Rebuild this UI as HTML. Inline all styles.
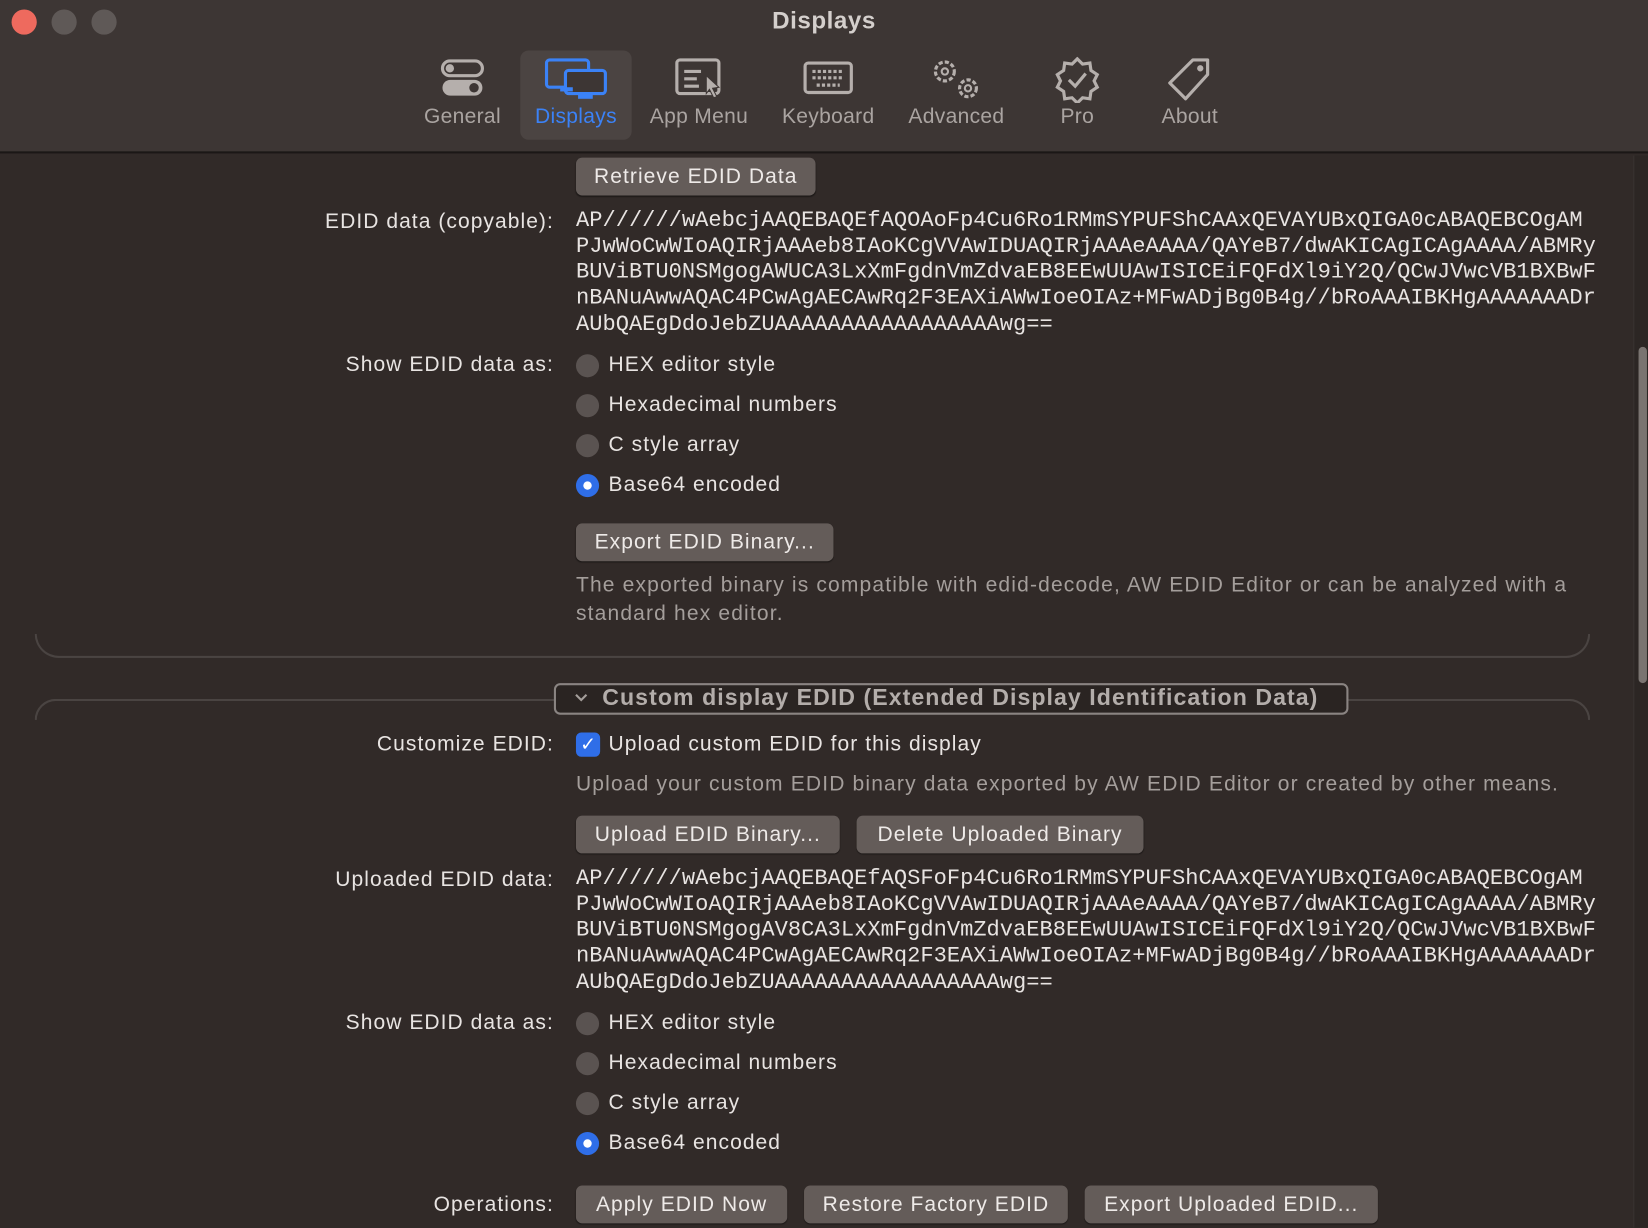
<!DOCTYPE html>
<html><head><meta charset="utf-8"><style>
*{margin:0;padding:0;box-sizing:border-box}
html,body{width:1648px;height:1228px;overflow:hidden;background:#312a28}
#w{width:1568px;height:1168px;transform:scale(1.05102);transform-origin:0 0;position:relative;font-family:"Liberation Sans",sans-serif;color:#e8e4e2}
.a{position:absolute;white-space:nowrap}
.tb{position:absolute;left:0;top:0;width:1568px;height:146px;background:#3d3634;border-bottom:2px solid #1b1716}
.dot{position:absolute;top:9px;width:24px;height:24px;border-radius:50%}
.tab{position:absolute;top:48px;height:85px;text-align:center;font-size:20px;color:#aaa4a1;letter-spacing:.3px}
.tab svg{position:absolute;left:50%;transform:translateX(-50%);top:6px}
.tab span{position:absolute;left:-10px;right:-10px;top:52px}
.ls{letter-spacing:1px}
.lbl{position:absolute;right:1041px;font-size:20px;text-align:right;white-space:nowrap;letter-spacing:1px}
.btn{position:absolute;height:36px;background:#645c59;border-radius:6px;font-size:20px;line-height:36px;text-align:center;color:#eeeae8;box-shadow:0 1px 1px rgba(0,0,0,.4);letter-spacing:1px}
.mono{position:absolute;left:548px;font-family:"Liberation Mono",monospace;font-size:21px;line-height:24.7px;color:#e8e4e2;white-space:pre}
.rad{position:absolute;left:548px;font-size:20px;white-space:nowrap;letter-spacing:1px}
.rad i{position:absolute;left:0;top:1px;width:22px;height:22px;border-radius:50%;background:#5a5351}
.rad b{font-weight:normal;position:absolute;left:31px;top:0}
.rad i.on{background:#2f6ee8}
.rad i.on:after{content:"";position:absolute;left:7px;top:7px;width:8px;height:8px;border-radius:50%;background:#fff}
.gray{color:#a49e9b;font-size:20px;letter-spacing:1.1px}
</style></head><body><div id="w">
<div class="tb"></div>
<div class="dot" style="left:11px;background:#ee6a5e"></div>
<div class="dot" style="left:49px;background:#5f5957"></div>
<div class="dot" style="left:87px;background:#5f5957"></div>
<div class="a" style="left:0;width:1568px;text-align:center;top:6px;font-size:23px;font-weight:bold;color:#d4cfcc;letter-spacing:.5px">Displays</div>

<div style="position:absolute;left:495px;top:48px;width:106px;height:85px;background:#4b4442;border-radius:8px"></div>
<div class="tab" style="left:390px;width:100px"><svg width="44" height="42" viewBox="0 0 44 42"><rect x="3" y="4" width="38" height="14" rx="7" fill="none" stroke="#b5afac" stroke-width="3"/><circle cx="10" cy="11" r="4" fill="#b5afac"/><rect x="3" y="22" width="38" height="15" rx="7.5" fill="#b5afac"/><circle cx="33" cy="29.5" r="4.5" fill="#3d3634"/></svg><span>General</span></div>
<div class="tab" style="left:495px;width:106px;color:#3b82f6"><svg width="62" height="42" viewBox="0 0 62 42"><rect x="3" y="3" width="40" height="26" rx="3" fill="none" stroke="#3b82f6" stroke-width="3"/><rect x="21" y="13" width="38" height="22" rx="3" fill="#3d3634" stroke="#3b82f6" stroke-width="3"/><rect x="16" y="29" width="12" height="4" fill="#3b82f6"/><rect x="33" y="35" width="14" height="5" fill="#3b82f6"/></svg><span>Displays</span></div>
<div class="tab" style="left:612px;width:106px"><svg width="48" height="42" viewBox="0 0 48 42"><rect x="3" y="3" width="40" height="32" rx="3" fill="none" stroke="#b5afac" stroke-width="3"/><path d="M10 14h16M10 21h12M10 28h14" stroke="#b5afac" stroke-width="3"/><path d="M31 18l12 11-6 1 4 8-3 1-4-8-3 4z" fill="#b5afac" stroke="#3d3634" stroke-width="1"/></svg><span>App Menu</span></div>
<div class="tab" style="left:736px;width:104px"><svg width="50" height="42" viewBox="0 0 50 42"><rect x="3" y="6" width="44" height="28" rx="3" fill="none" stroke="#b5afac" stroke-width="3"/><path d="M10 14h30M10 20h30M14 27h22" stroke="#b5afac" stroke-width="3" stroke-dasharray="3 2"/></svg><span>Keyboard</span></div>
<div class="tab" style="left:856px;width:108px"><svg width="54" height="42" viewBox="0 0 54 42"><circle cx="16" cy="14" r="9" fill="none" stroke="#b5afac" stroke-width="3" stroke-dasharray="4 2"/><circle cx="16" cy="14" r="3" fill="none" stroke="#b5afac" stroke-width="2"/><circle cx="38" cy="30" r="8" fill="none" stroke="#b5afac" stroke-width="3" stroke-dasharray="4 2"/><circle cx="38" cy="30" r="3" fill="none" stroke="#b5afac" stroke-width="2"/></svg><span>Advanced</span></div>
<div class="tab" style="left:985px;width:80px"><svg width="46" height="44" viewBox="0 0 46 44"><path d="M23 2l5 5 7-1 1 7 6 4-3 6 3 6-6 4-1 7-7-1-5 5-5-5-7 1-1-7-6-4 3-6-3-6 6-4 1-7 7 1z" fill="none" stroke="#b5afac" stroke-width="3"/><path d="M15 22l6 6 10-12" fill="none" stroke="#b5afac" stroke-width="3"/></svg><span>Pro</span></div>
<div class="tab" style="left:1092px;width:80px"><svg width="46" height="44" viewBox="0 0 46 44"><path d="M26 3h14v14L19 40 4 25z" fill="none" stroke="#b5afac" stroke-width="3" stroke-linejoin="round"/><circle cx="33" cy="11" r="3" fill="#b5afac"/></svg><span>About</span></div>

<div style="position:absolute;left:1554px;top:148px;width:14px;height:1020px;background:#2c2624;border-left:1px solid #3a3432"></div>
<div style="position:absolute;left:1559px;top:330px;width:8px;height:320px;border-radius:4px;background:#7a7471"></div>

<div class="btn" style="left:548px;top:150px;width:228px">Retrieve EDID Data</div>
<div class="lbl" style="top:200px">EDID data (copyable):</div>
<div class="mono" style="top:199px">AP//////wAebcjAAQEBAQEfAQOAoFp4Cu6Ro1RMmSYPUFShCAAxQEVAYUBxQIGA0cABAQEBCOgAM
PJwWoCwWIoAQIRjAAAeb8IAoKCgVVAwIDUAQIRjAAAeAAAA/QAYeB7/dwAKICAgICAgAAAA/ABMRy
BUViBTU0NSMgogAWUCA3LxXmFgdnVmZdvaEB8EEwUUAwISICEiFQFdXl9iY2Q/QCwJVwcVB1BXBwF
nBANuAwwAQAC4PCwAgAECAwRq2F3EAXiAWwIoeOIAz+MFwADjBg0B4g//bRoAAAIBKHgAAAAAAADr
AUbQAEgDdoJebZUAAAAAAAAAAAAAAAAAwg==</div>
<div class="lbl" style="top:336px">Show EDID data as:</div>
<div class="rad" style="top:336px"><i></i><b>HEX editor style</b></div>
<div class="rad" style="top:374px"><i></i><b>Hexadecimal numbers</b></div>
<div class="rad" style="top:412px"><i></i><b>C style array</b></div>
<div class="rad" style="top:450px"><i class="on"></i><b>Base64 encoded</b></div>
<div class="btn" style="left:548px;top:498px;width:245px">Export EDID Binary...</div>
<div class="a gray" style="left:548px;top:544px;line-height:27px">The exported binary is compatible with edid-decode, AW EDID Editor or can be analyzed with a<br>standard hex editor.</div>

<div style="position:absolute;left:33px;top:603px;width:1480px;height:23px;border:2px solid #4a4442;border-top:none;border-radius:0 0 24px 24px"></div>
<div style="position:absolute;left:33px;top:665px;width:1480px;height:20px;border:2px solid #4a4442;border-bottom:none;border-radius:24px 24px 0 0"></div>
<div style="position:absolute;left:527px;top:650px;width:756px;height:30px;border:2px solid #8a8482;border-radius:6px;background:#2a2422"></div>
<svg style="position:absolute;left:546px;top:659px" width="14" height="10" viewBox="0 0 14 10"><path d="M2 2l5 5 5-5" fill="none" stroke="#a49e9b" stroke-width="2"/></svg>
<div class="a" style="left:573px;top:651px;font-size:22px;font-weight:bold;color:#b3adaa;letter-spacing:1px">Custom display EDID (Extended Display Identification Data)</div>

<div class="lbl" style="top:697px">Customize EDID:</div>
<div style="position:absolute;left:548px;top:697px;width:23px;height:23px;border-radius:5px;background:#2f6ee8;color:#fff;font-size:18px;text-align:center;line-height:23px">&#10003;</div>
<div class="a ls" style="left:579px;top:697px;font-size:20px">Upload custom EDID for this display</div>
<div class="a gray" style="left:548px;top:735px">Upload your custom EDID binary data exported by AW EDID Editor or created by other means.</div>
<div class="btn" style="left:548px;top:776px;width:251px">Upload EDID Binary...</div>
<div class="btn" style="left:815px;top:776px;width:273px">Delete Uploaded Binary</div>
<div class="lbl" style="top:826px">Uploaded EDID data:</div>
<div class="mono" style="top:825px">AP//////wAebcjAAQEBAQEfAQSFoFp4Cu6Ro1RMmSYPUFShCAAxQEVAYUBxQIGA0cABAQEBCOgAM
PJwWoCwWIoAQIRjAAAeb8IAoKCgVVAwIDUAQIRjAAAeAAAA/QAYeB7/dwAKICAgICAgAAAA/ABMRy
BUViBTU0NSMgogAV8CA3LxXmFgdnVmZdvaEB8EEwUUAwISICEiFQFdXl9iY2Q/QCwJVwcVB1BXBwF
nBANuAwwAQAC4PCwAgAECAwRq2F3EAXiAWwIoeOIAz+MFwADjBg0B4g//bRoAAAIBKHgAAAAAAADr
AUbQAEgDdoJebZUAAAAAAAAAAAAAAAAAwg==</div>
<div class="lbl" style="top:962px">Show EDID data as:</div>
<div class="rad" style="top:962px"><i></i><b>HEX editor style</b></div>
<div class="rad" style="top:1000px"><i></i><b>Hexadecimal numbers</b></div>
<div class="rad" style="top:1038px"><i></i><b>C style array</b></div>
<div class="rad" style="top:1076px"><i class="on"></i><b>Base64 encoded</b></div>
<div class="lbl" style="top:1135px">Operations:</div>
<div class="btn" style="left:548px;top:1128px;width:201px">Apply EDID Now</div>
<div class="btn" style="left:765px;top:1128px;width:251px">Restore Factory EDID</div>
<div class="btn" style="left:1032px;top:1128px;width:279px">Export Uploaded EDID...</div>
</div></body></html>
